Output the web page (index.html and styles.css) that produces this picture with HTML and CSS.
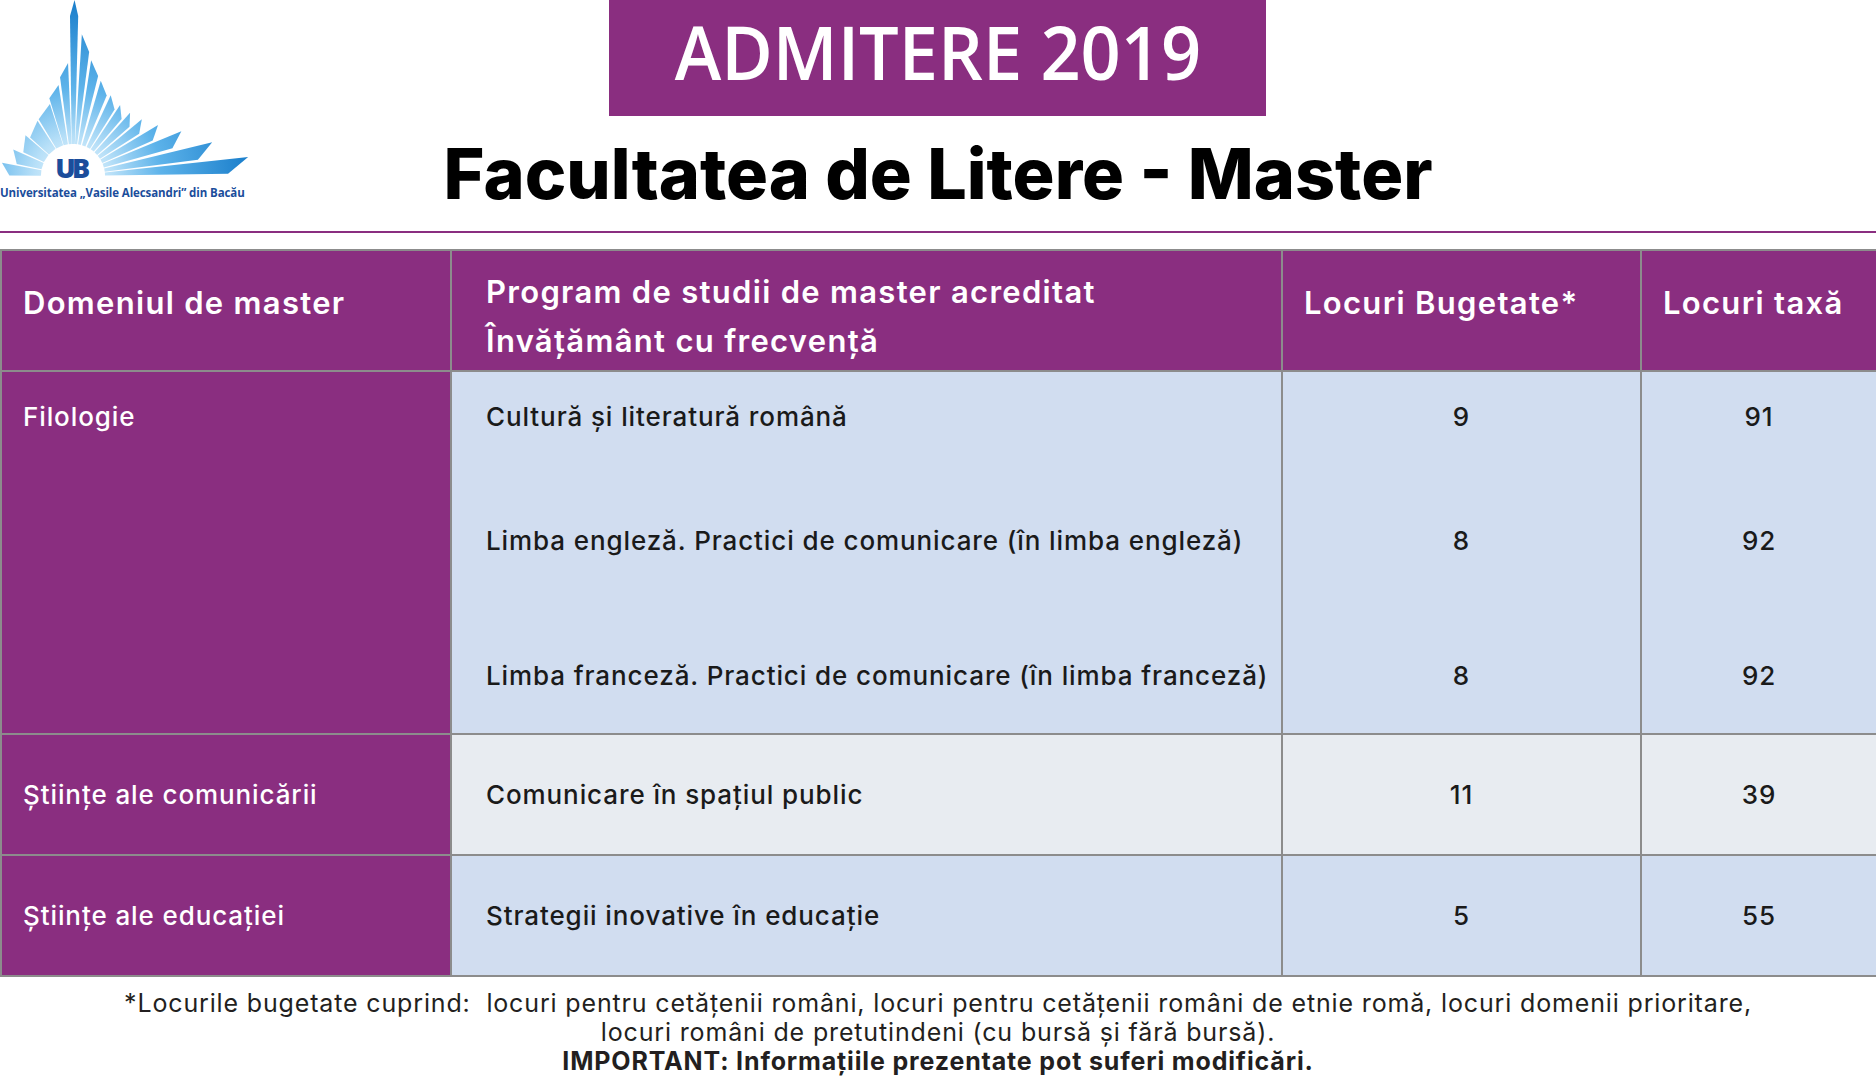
FILE: index.html
```html
<!DOCTYPE html>
<html lang="ro">
<head>
<meta charset="utf-8">
<title>Admitere 2019 - Facultatea de Litere - Master</title>
<link rel="stylesheet" href="styles.css">
</head>
<body>
<header class="top">
  <div class="logo">
    <svg class="logo-mark" width="250" height="186" viewBox="0 0 250 186">
      <defs>
        <radialGradient id="rayFill" gradientUnits="userSpaceOnUse" cx="0" cy="0" r="176">
          <stop offset="0" stop-color="#eef8fe"/>
          <stop offset="0.22" stop-color="#b8e0f8"/>
          <stop offset="0.5" stop-color="#5db3ea"/>
          <stop offset="1" stop-color="#1a7ecb"/>
        </radialGradient>
      </defs>
      <g transform="translate(73 176)" fill="url(#rayFill)">
        <polygon points="32,-2.8 63.4,-5.5 72,6.3 32,2.8" transform="rotate(185.5)"/>
        <polygon points="32,-3.4 57.2,-6 65,6.8 32,3.4" transform="rotate(198)"/>
        <polygon points="32,-4.2 54.6,-7.2 62,8.2 32,4.2" transform="rotate(213)"/>
        <polygon points="32,-4.4 57.2,-7.6 65,8.8 32,4.4" transform="rotate(229.5)"/>
        <polygon points="32,-3.8 66,-7.7 75,8.8 32,3.8" transform="rotate(245.5)"/>
        <polygon points="32,-2.2 81,-5.6 92,6.4 32,2.2" transform="rotate(257)"/>
        <polygon points="32,-1.4 99.4,-4.3 113,4.9 32,1.4" transform="rotate(265)"/>
        <polygon points="32,-1.6 160,-4.4 176,0 160,3.8 32,1.6" transform="rotate(270.5)"/>
        <polygon points="32,-1.1 142,-4.8 125,4.2 32,1.1" transform="rotate(275.5)"/>
        <polygon points="32,-1.4 117,-5.3 103,4.7 32,1.4" transform="rotate(281.5)"/>
        <polygon points="32,-1.8 99,-5.6 87.1,4.9 32,1.8" transform="rotate(289.5)"/>
        <polygon points="32,-1.9 89,-5.4 78.3,4.8 32,1.9" transform="rotate(298.5)"/>
        <polygon points="32,-1.9 85,-5.1 74.8,4.5 32,1.9" transform="rotate(307)"/>
        <polygon points="32,-1.9 85,-5.1 74.8,4.5 32,1.9" transform="rotate(315.5)"/>
        <polygon points="32,-1.9 89,-5.4 78.3,4.8 32,1.9" transform="rotate(324)"/>
        <polygon points="32,-1.9 99,-6 87.1,5.3 32,1.9" transform="rotate(332.5)"/>
        <polygon points="32,-1.9 117,-7 103,6.2 32,1.9" transform="rotate(341)"/>
        <polygon points="32,-1.7 143,-7.7 125.8,6.8 32,1.7" transform="rotate(349.5)"/>
        <polygon points="32,-1.5 176,-8.3 154.9,7.3 32,1.5" transform="rotate(356.5)"/>
      </g>
      <text class="ub" x="71" y="178" text-anchor="middle">UB</text>
    </svg>
    <div class="logo-name">Universitatea „Vasile Alecsandri” din Bacău</div>
  </div>
  <div class="center">
    <div class="banner"><span class="banner-text">ADMITERE 2019</span></div>
    <h1 class="title">Facultatea de Litere - Master</h1>
  </div>
  <div class="spacer"></div>
</header>

<table class="grid">
  <colgroup>
    <col class="c-dom">
    <col class="c-prog">
    <col class="c-bug">
    <col class="c-tax">
  </colgroup>
  <thead>
    <tr class="head">
      <th class="h-single">Domeniul de master</th>
      <th class="h-prog">Program de studii de master acreditat<br>Învățământ cu frecvență</th>
      <th class="h-single">Locuri Bugetate*</th>
      <th class="h-single">Locuri taxă</th>
    </tr>
  </thead>
  <tbody>
    <tr class="sa">
      <td class="dom dom-top" rowspan="3">Filologie</td>
      <td class="prog">Cultură și literatură română</td>
      <td class="num">9</td>
      <td class="num">91</td>
    </tr>
    <tr class="sb">
      <td class="prog">Limba engleză. Practici de comunicare (în limba engleză)</td>
      <td class="num">8</td>
      <td class="num">92</td>
    </tr>
    <tr class="sc">
      <td class="prog">Limba franceză. Practici de comunicare (în limba franceză)</td>
      <td class="num">8</td>
      <td class="num">92</td>
    </tr>
    <tr class="row gray">
      <td class="dom">Științe ale comunicării</td>
      <td class="prog">Comunicare în spațiul public</td>
      <td class="num">11</td>
      <td class="num">39</td>
    </tr>
    <tr class="row">
      <td class="dom">Științe ale educației</td>
      <td class="prog">Strategii inovative în educație</td>
      <td class="num">5</td>
      <td class="num">55</td>
    </tr>
  </tbody>
</table>

<footer class="notes">
  <div class="note-line">*Locurile bugetate cuprind:&nbsp; locuri pentru cetățenii români, locuri pentru cetățenii români de etnie romă, locuri domenii prioritare,</div>
  <div class="note-line">locuri români de pretutindeni (cu bursă și fără bursă).</div>
  <div class="note-line note-strong">IMPORTANT: Informațiile prezentate pot suferi modificări.</div>
</footer>
</body>
</html>
```

FILE: styles.css
```css
html, body {
  margin: 0;
  padding: 0;
  background: #ffffff;
}

body {
  width: 1876px;
  font-family: Inter, "Open Sans", "DejaVu Sans", sans-serif;
  color: #1a1a1a;
}

/* ---------- header ---------- */
.top {
  display: grid;
  grid-template-columns: 1fr auto 1fr;
  height: 231px;
  border-bottom: 2px solid #8a2e80;
}

.logo {
  justify-self: start;
  display: flex;
  flex-direction: column;
}

.logo-mark {
  display: block;
}

.ub {
  font-family: "Open Sans", sans-serif;
  font-weight: 800;
  font-size: 27px;
  letter-spacing: -3.5px;
  fill: #1b4d9b;
}

.logo-name {
  font-family: "Open Sans", sans-serif;
  font-weight: 700;
  font-size: 11.5px;
  line-height: 13px;
  letter-spacing: -0.1px;
  color: #1b4d9b;
  white-space: nowrap;
}

.center {
  display: flex;
  flex-direction: column;
  align-items: center;
}

.banner {
  width: 657px;
  height: 116px;
  background: #8a2e80;
  display: flex;
  align-items: center;
  justify-content: center;
}

.banner-text {
  display: inline-block;
  font-family: "Open Sans", sans-serif;
  font-weight: 600;
  font-size: 74px;
  line-height: 1;
  color: #ffffff;
  transform: scaleX(0.95);
  margin-top: -13px;
}

.title {
  margin: 23px 0 0;
  font-family: Inter, "Open Sans", sans-serif;
  font-weight: 800;
  font-size: 70px;
  line-height: 1;
  color: #000000;
  white-space: nowrap;
}

/* ---------- table ---------- */
.grid {
  margin-top: 16px;
  width: 1876px;
  border-collapse: collapse;
  table-layout: fixed;
  border: 2px solid #8c8c8c;
}

.c-dom { width: 450px; }
.c-prog { width: 831px; }
.c-bug { width: 359px; }
.c-tax { width: 236px; }

.grid th,
.grid td {
  border: 2px solid #8c8c8c;
  padding: 0;
}

.head {
  height: 121px;
}

.grid th {
  background: #8a2e80;
  color: #ffffff;
  font-weight: 600;
  font-size: 31px;
  letter-spacing: 1.3px;
  line-height: 49px;
  text-align: left;
  vertical-align: top;
  padding-left: 21px;
}

.grid th.h-single {
  padding-top: 27px;
}

.grid th.h-prog {
  padding-top: 16px;
  padding-left: 34px;
}

.grid td {
  font-size: 26px;
  font-weight: 500;
  letter-spacing: 0.9px;
  line-height: 36px;
  vertical-align: middle;
  background: #d1ddf0;
  color: #1a1a1a;
}

.grid td.dom {
  background: #8a2e80;
  color: #ffffff;
  padding-left: 21px;
}

.grid td.dom-top {
  vertical-align: top;
  padding-top: 27px;
}

.grid td.prog {
  padding-left: 34px;
  white-space: nowrap;
}

.grid td.num {
  text-align: center;
}

.sa { height: 91px; }
.sb { height: 157px; }
.sc { height: 115px; }
.row { height: 121px; }

.sa td:not(.dom),
.sb td {
  border-bottom: none;
}

.sb td,
.sc td {
  border-top: none;
}

.gray td:not(.dom) {
  background: #e8ecf1;
}

/* ---------- footer ---------- */
.notes {
  margin-top: 12px;
  text-align: center;
  font-size: 25px;
  letter-spacing: 0.85px;
  line-height: 29px;
  color: #231f20;
}

.note-line {
  white-space: nowrap;
}

.note-strong {
  font-weight: 700;
}
```
